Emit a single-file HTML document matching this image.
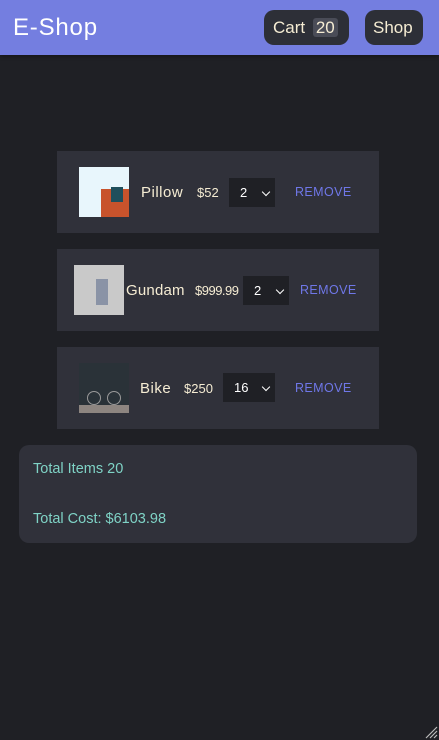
<!DOCTYPE html>
<html><head><style>
*{margin:0;padding:0;box-sizing:border-box}
body{width:439px;height:740px;background:#1f2025;font-family:"Liberation Sans",sans-serif;position:relative;overflow:hidden;color:#f5ecd3}
.a{position:absolute}
.hdr{left:0;top:0;width:439px;height:55px;background:#747ee0;box-shadow:0 1px 4px rgba(0,0,0,.4)}
.btn{background:#2d2f37;border-radius:10px;height:35px;top:10px;font-size:17px;line-height:35px;color:#f5ecd3}
.card{left:57px;width:322px;height:82px;background:#30313a}
.img{width:50px;height:50px}
.sel{background:#1f2025;height:29px;font-size:13px;line-height:29px;color:#fff}
.rm{color:#6f77e8;font-size:12.5px;letter-spacing:.4px}
.nm{font-size:15px;letter-spacing:.5px}
.pr{font-size:13px}
.chev{position:absolute;right:6px;top:11px;width:6px;height:6px;border-right:1.5px solid #fff;border-bottom:1.5px solid #fff;transform:rotate(45deg)}
</style></head><body>
<div class="a hdr"></div>
<div class="a" style="left:13px;top:14px;font-size:24px;color:#fff;letter-spacing:.8px">E-Shop</div>
<div class="a btn" style="left:264px;width:85px;padding-left:9px">Cart <span style="background:#4a4c57;border-radius:3px;padding:0 3px;margin-left:3px">20</span></div>
<div class="a btn" style="left:365px;width:58px;padding-left:8px">Shop</div>

<div class="a card" style="top:151px"></div>
<div class="a img" style="left:79px;top:167px;background:#e8f6fc"><div class="a" style="left:22px;top:22px;width:28px;height:28px;background:#c8532c"></div><div class="a" style="left:32px;top:20px;width:12px;height:15px;background:#1f4f5c"></div></div>
<div class="a nm" style="left:141px;top:184px">Pillow</div>
<div class="a pr" style="left:197px;top:185px">$52</div>
<div class="a sel" style="left:229px;top:178px;width:46px;padding-left:11px">2<span class="chev"></span></div>
<div class="a rm" style="left:295px;top:185px">REMOVE</div>

<div class="a card" style="top:249px"></div>
<div class="a img" style="left:74px;top:265px;background:#c9c9c9"><div class="a" style="left:22px;top:14px;width:12px;height:26px;background:#8a93a6"></div></div>
<div class="a nm" style="left:126px;top:282px;letter-spacing:.2px">Gundam</div>
<div class="a pr" style="left:195px;top:283px;letter-spacing:-.5px">$999.99</div>
<div class="a sel" style="left:243px;top:276px;width:46px;padding-left:11px">2<span class="chev"></span></div>
<div class="a rm" style="left:300px;top:283px">REMOVE</div>

<div class="a card" style="top:347px"></div>
<div class="a img" style="left:79px;top:363px;background:#2a3238"><div class="a" style="left:0;top:42px;width:50px;height:8px;background:#8d8580"></div><div class="a" style="left:8px;top:28px;width:14px;height:14px;border:1.5px solid #999;border-radius:50%"></div><div class="a" style="left:28px;top:28px;width:14px;height:14px;border:1.5px solid #999;border-radius:50%"></div></div>
<div class="a nm" style="left:140px;top:380px">Bike</div>
<div class="a pr" style="left:184px;top:381px">$250</div>
<div class="a sel" style="left:223px;top:373px;width:52px;padding-left:11px">16<span class="chev"></span></div>
<div class="a rm" style="left:295px;top:381px">REMOVE</div>

<div class="a" style="left:19px;top:445px;width:398px;height:98px;background:#30313a;border-radius:10px"></div>
<div class="a" style="left:33px;top:461px;font-size:14.5px;color:#7fd3c6">Total Items 20</div>
<div class="a" style="left:33px;top:511px;font-size:14.5px;color:#7fd3c6">Total Cost: $6103.98</div>

<svg class="a" style="left:424px;top:725px" width="14" height="14"><path d="M13 2L2 13M13 6L6 13M13 10L10 13" stroke="#bbb" stroke-width="1.2"/></svg>
</body></html>
